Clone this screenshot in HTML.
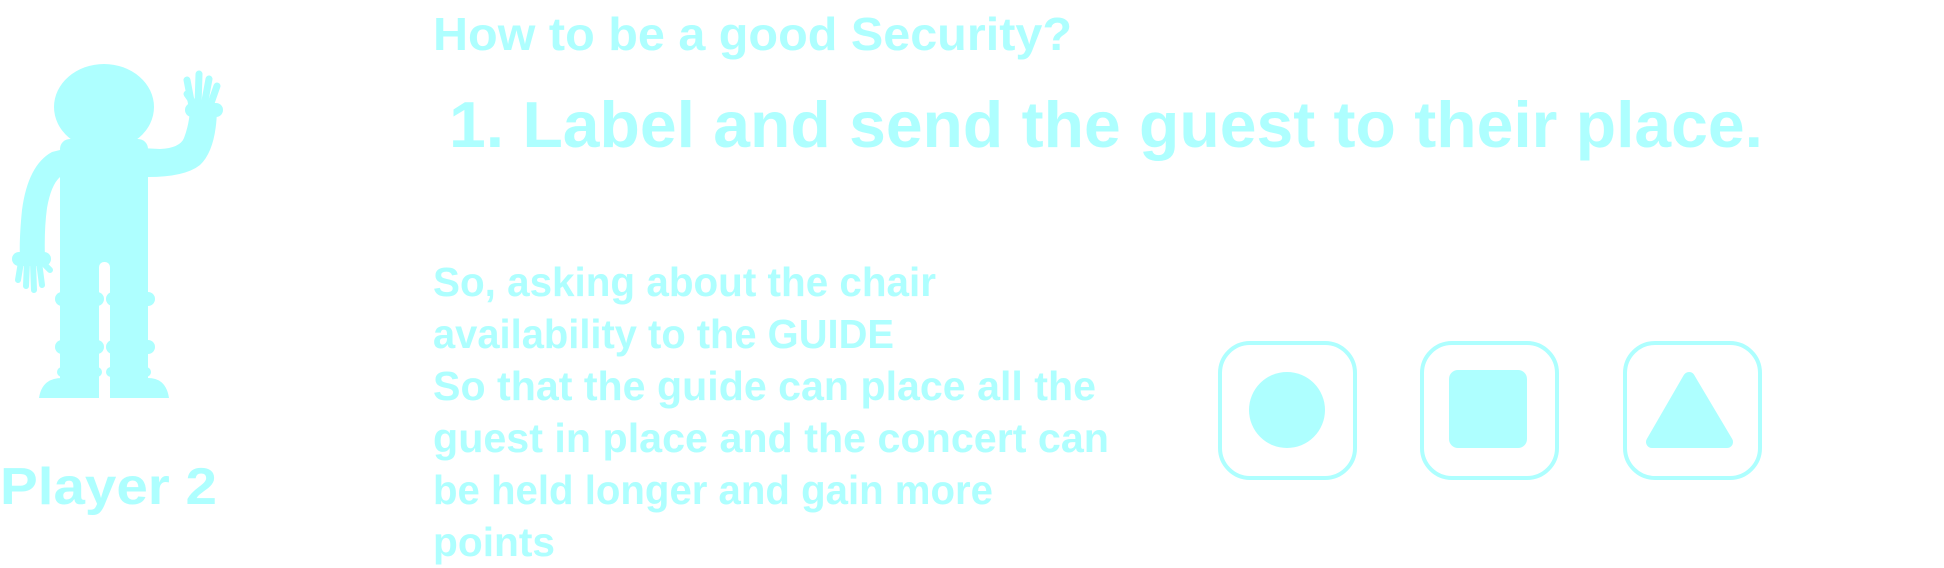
<!DOCTYPE html>
<html><head><meta charset="utf-8"><style>
html,body{margin:0;padding:0;background:#fff;width:1944px;height:568px;overflow:hidden}
svg{display:block}
text{font-family:"Liberation Sans",sans-serif;font-weight:bold;fill:#aeffff}
</style></head><body>
<svg width="1944" height="568" viewBox="0 0 1944 568" xmlns="http://www.w3.org/2000/svg">
<g fill="#aeffff">
  <ellipse cx="104" cy="107" rx="50" ry="43"/>
  <rect x="60" y="139" width="88" height="20" rx="10"/>
  <rect x="60" y="150" width="88" height="150"/>
  <rect x="60" y="290" width="39" height="108"/>
  <rect x="110" y="290" width="38" height="108"/>
  <rect x="60" y="262" width="88" height="40"/>
  <rect x="99" y="262" width="11" height="40" fill="#fff" rx="5"/>
  <rect x="99" y="272" width="11" height="130" fill="#fff"/>
  <rect x="55" y="292" width="49" height="14" rx="7"/>
  <rect x="106" y="292" width="49" height="14" rx="7"/>
  <rect x="55" y="340" width="49" height="14" rx="7"/>
  <rect x="106" y="340" width="49" height="14" rx="7"/>
  <rect x="57" y="367" width="45" height="10" rx="5"/>
  <rect x="106" y="367" width="45" height="10" rx="5"/>
  <path d="M39 398 Q42 378 62 378 L99 378 L99 398 Z"/>
  <path d="M110 398 L110 378 L148 378 Q166 378 169 398 Z"/>
  <path d="M140 148 L160 149 Q180 148 184 138 Q189 125 190 110 L217 110 Q216 150 200 165 Q185 177 148 177 Z"/>
  <rect x="185" y="103" width="38" height="14" rx="7"/>
  <path d="M192 106 L187 80" stroke="#aeffff" stroke-width="7" stroke-linecap="round"/>
  <path d="M198 106 L199 74" stroke="#aeffff" stroke-width="7" stroke-linecap="round"/>
  <path d="M204 106 L209 79" stroke="#aeffff" stroke-width="7" stroke-linecap="round"/>
  <path d="M210 106 L217 86" stroke="#aeffff" stroke-width="7" stroke-linecap="round"/>
  <path d="M194 104 L187 94" stroke="#aeffff" stroke-width="7" stroke-linecap="round"/>
  <path d="M60 150 L52 152 Q28 165 22 210 Q19 240 20 258 L45 258 Q44 230 47 208 Q51 185 60 177 Z"/>
  <rect x="12" y="252" width="39" height="14" rx="7"/>
  <path d="M21 262 L18 280" stroke="#aeffff" stroke-width="6" stroke-linecap="round"/>
  <path d="M27 262 L26 286" stroke="#aeffff" stroke-width="6" stroke-linecap="round"/>
  <path d="M33 262 L34 290" stroke="#aeffff" stroke-width="6" stroke-linecap="round"/>
  <path d="M39 262 L42 285" stroke="#aeffff" stroke-width="6" stroke-linecap="round"/>
  <path d="M45 265 L50 270" stroke="#aeffff" stroke-width="6" stroke-linecap="round"/>
</g>

<text x="433" y="50" font-size="46" textLength="639" lengthAdjust="spacingAndGlyphs">How to be a good Security?</text>
<text x="449" y="147" font-size="65" textLength="1314" lengthAdjust="spacingAndGlyphs">1. Label and send the guest to their place.</text>

<text x="433" y="296" font-size="41" textLength="503" lengthAdjust="spacingAndGlyphs">So, asking about the chair</text>
<text x="433" y="348" font-size="41" textLength="461" lengthAdjust="spacingAndGlyphs">availability to the GUIDE</text>
<text x="433" y="400" font-size="41" textLength="663" lengthAdjust="spacingAndGlyphs">So that the guide can place all the</text>
<text x="433" y="452" font-size="41" textLength="676" lengthAdjust="spacingAndGlyphs">guest in place and the concert can</text>
<text x="433" y="504" font-size="41" textLength="560" lengthAdjust="spacingAndGlyphs">be held longer and gain more</text>
<text x="433" y="556" font-size="41" textLength="122" lengthAdjust="spacingAndGlyphs">points</text>

<text x="0" y="504" font-size="52" textLength="217" lengthAdjust="spacingAndGlyphs">Player 2</text>

<g fill="none" stroke="#aeffff" stroke-width="4">
  <rect x="1220" y="343" width="135" height="135" rx="30"/>
  <rect x="1422" y="343" width="135" height="135" rx="30"/>
  <rect x="1625" y="343" width="135" height="135" rx="30"/>
</g>
<g fill="#aeffff">
  <circle cx="1287" cy="410" r="38"/>
  <rect x="1449" y="370" width="78" height="78" rx="9"/>
  <path d="M1689 378 L1652 442 L1727 442 Z" stroke="#aeffff" stroke-width="12" stroke-linejoin="round"/>
</g>
</svg>
</body></html>
